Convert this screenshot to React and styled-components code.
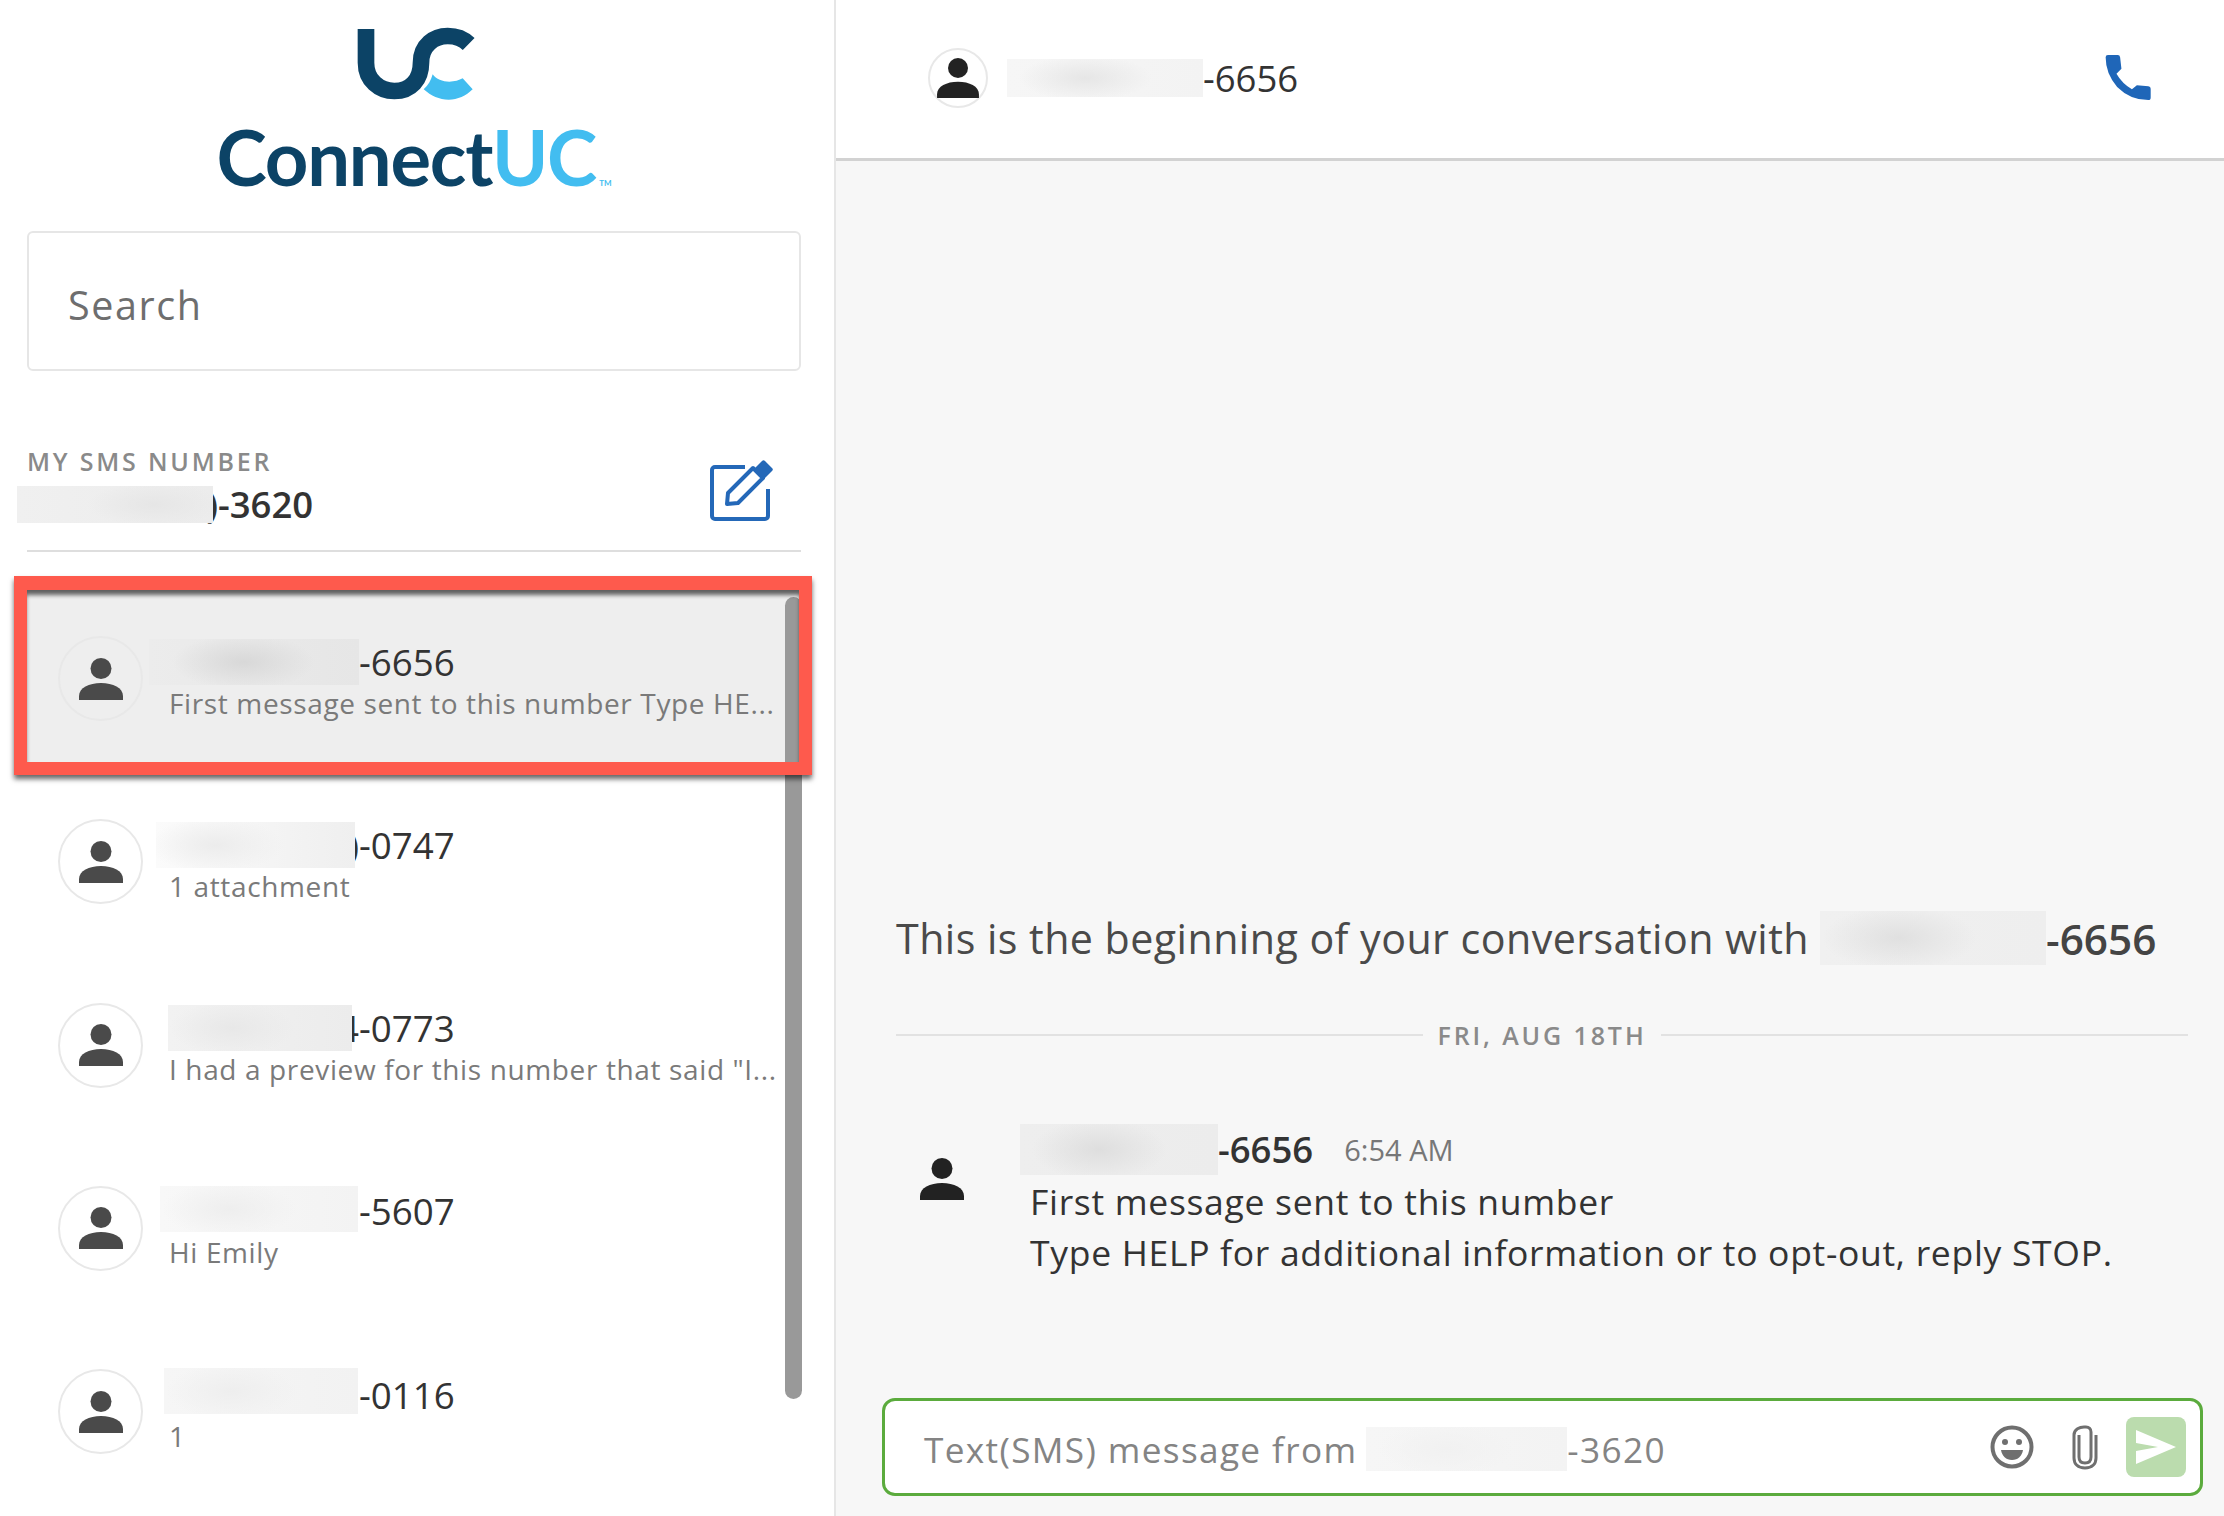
import React from "react";
import styled, { createGlobalStyle } from "styled-components";

const Global = createGlobalStyle`
  html, body { margin: 0; padding: 0; background: #fff; }
  body { font-family: "Open Sans", "Noto Sans", sans-serif; color: #333; }
  * { box-sizing: border-box; }
`;

const Page = styled.div`
  width: 2224px;
  height: 1516px;
  display: flex;
  overflow: hidden;
  background: #fff;
`;

const Sidebar = styled.aside`
  width: 836px;
  flex: none;
  height: 100%;
  border-right: 2px solid #e6e6e6;
  display: flex;
  flex-direction: column;
  overflow: hidden;
`;

const Brand = styled.div`
  height: 231px;
  padding-top: 26px;
  display: flex;
  flex-direction: column;
  align-items: center;
`;

const Mark = styled.svg`
  display: block;
  width: 120px;
  height: 75px;
  margin-left: -2px;
`;

const Wordmark = styled.div`
  margin-top: 17px;
  font-family: "Lato", sans-serif;
  font-weight: 700;
  font-size: 76px;
  line-height: 78px;
  letter-spacing: -1.2px;
  color: #0c4366;
  white-space: nowrap;
  margin-left: -6px;
`;

const WordAccent = styled.span`
  color: #42bdf0;
`;

const Tm = styled.sup`
  font-size: 8px;
  letter-spacing: 0;
  color: #42bdf0;
  vertical-align: baseline;
  margin-left: 3px;
`;

const Search = styled.div`
  margin: 0 33px 0 27px;
  height: 140px;
  flex: none;
  border: 2px solid #e6e6e6;
  border-radius: 6px;
  padding: 8px 0 0 39px;
  display: flex;
  align-items: center;
  font-size: 39.5px;
  letter-spacing: 1.6px;
  color: #6e6e6e;
`;

const NumberBlock = styled.div`
  margin: 0 33px 0 27px;
  height: 181px;
  flex: none;
  border-bottom: 2px solid #dedede;
  display: flex;
  justify-content: space-between;
  padding-top: 77px;
`;

const NumberText = styled.div`
  display: flex;
  flex-direction: column;
`;

const Eyebrow = styled.div`
  font-size: 25px;
  font-weight: 600;
  line-height: 26px;
  letter-spacing: 2.8px;
  color: #8a8a8a;
`;

const MyNumber = styled.div`
  display: flex;
  align-items: center;
  height: 44px;
  margin-top: 8px;
  font-size: 36.5px;
  font-weight: 600;
  color: #333;
`;

const EditButton = styled.svg`
  width: 64px;
  height: 64px;
  margin: 9px 28px 0 0;
  color: #2468b8;
`;

const Redaction = styled.span`
  position: relative;
  z-index: 1;
  flex: none;
  display: block;
  width: ${(p) => p.$w}px;
  height: ${(p) => p.$h}px;
  margin-left: ${(p) => p.$left || 0}px;
  transform: translateY(${(p) => p.$dy || 0}px);
  background:
    radial-gradient(ellipse 34% 60% at ${(p) => p.$spot || 40}% 50%, ${(p) => p.$dark || "#e4e4e4"}, transparent),
    linear-gradient(90deg, ${(p) => p.$base || "#f6f6f6"}, ${(p) => p.$mid || "#f0f0f0"});
`;

const Peek = styled.span`
  flex: none;
  width: ${(p) => p.$w}px;
  display: flex;
  justify-content: flex-end;
`;

const List = styled.div`
  position: relative;
  margin-top: 35px;
  flex: 1;
  display: flex;
  flex-direction: column;
`;

const Row = styled.div`
  flex: none;
  height: 183.25px;
  margin: 0 33px 0 27px;
  padding-left: 31px;
  display: flex;
  align-items: center;
  gap: 26px;
  background: ${(p) => (p.$active ? "#eeeeee" : "transparent")};
`;

const Avatar = styled.div`
  flex: none;
  width: 85px;
  height: 85px;
  border-radius: 50%;
  border: 2px solid #e8e8e8;
  display: flex;
  align-items: center;
  justify-content: center;
  background: ${(p) => (p.$active ? "#eeeeee" : "#fff")};
`;

const PersonIcon = styled.svg`
  display: block;
  flex: none;
  width: ${(p) => p.$size || 44}px;
  height: ${(p) => Math.round((p.$size || 44) * 0.95)}px;
  color: ${(p) => p.$color || "#4a4a4a"};
`;

const RowText = styled.div`
  min-width: 0;
  width: 608px;
  margin-top: 6px;
`;

const RowName = styled.div`
  display: flex;
  align-items: center;
  height: 44px;
  font-size: 36.7px;
  color: #333;
`;

const Preview = styled.div`
  height: 40px;
  line-height: 39px;
  font-size: 28px;
  letter-spacing: 0.63px;
  color: #7a7a7a;
  white-space: nowrap;
`;

const Scrollbar = styled.div`
  position: absolute;
  top: 10px;
  left: 785px;
  width: 17px;
  height: 802px;
  border-radius: 9px;
  background: #999;
`;

const Highlight = styled.div`
  position: absolute;
  z-index: 2;
  top: -11px;
  left: 14px;
  width: 798px;
  height: 199px;
  border: 13px solid #fe5a4d;
  border-width: 14px 13px 13px 13px;
  box-shadow: 0 4px 5px rgba(0, 0, 0, 0.6), inset 0 6px 4px -1px rgba(0, 0, 0, 0.6);
`;

const Main = styled.main`
  flex: 1;
  min-width: 0;
  display: flex;
  flex-direction: column;
  background: #f7f7f7;
`;

const Header = styled.header`
  height: 161px;
  flex: none;
  background: #fff;
  border-bottom: 3px solid #d2d2d2;
  display: flex;
  align-items: center;
  justify-content: space-between;
  padding: 0 72px 3px 92px;
`;

const HeaderPerson = styled.div`
  display: flex;
  align-items: center;
  gap: 19px;
`;

const HeaderAvatar = styled(Avatar)`
  width: 60px;
  height: 60px;
`;

const HeaderName = styled.div`
  display: flex;
  align-items: center;
  font-size: 36.5px;
  color: #333;
`;

const PhoneIcon = styled.svg`
  display: block;
  width: 48px;
  height: 48px;
  color: #1f66b8;
`;

const Conversation = styled.section`
  flex: 1;
  display: flex;
  flex-direction: column;
  justify-content: flex-end;
  padding: 0 36px 20px 60px;
`;

const Intro = styled.div`
  display: flex;
  align-items: center;
  height: 56px;
  font-size: 41.2px;
  letter-spacing: 0.45px;
  color: #4a4a4a;
  white-space: nowrap;
`;

const IntroBold = styled.b`
  font-weight: 600;
  font-size: 42.3px;
  letter-spacing: 0;
  color: #444;
`;

const DateDivider = styled.div`
  display: flex;
  align-items: center;
  gap: 14px;
  margin-top: 52px;
  height: 34px;
  font-size: 25px;
  font-weight: 600;
  letter-spacing: 2.9px;
  color: #8a8a8a;
  white-space: nowrap;
  &::before, &::after {
    content: "";
    flex: 1;
    height: 2px;
    background: #e2e2e2;
  }
`;

const Message = styled.div`
  display: flex;
  margin-top: 106px;
  padding-left: 24px;
`;

const MessageBody = styled.div`
  margin-left: 66px;
`;

const MessageHead = styled.div`
  display: flex;
  align-items: center;
  height: 44px;
  margin-top: -31px;
`;

const SenderNumber = styled.span`
  font-size: 36.5px;
  font-weight: 600;
  color: #333;
`;

const Time = styled.span`
  margin-left: 31px;
  font-size: 29px;
  color: #777;
`;

const MessageLine = styled.div`
  height: 51px;
  line-height: 51px;
  font-size: 35.5px;
  letter-spacing: 0.69px;
  color: #333;
  white-space: nowrap;
`;

const Lines = styled.div`
  margin-top: 5px;
`;

const Composer = styled.div`
  margin: 120px -15px 0 -14px;
  height: 98px;
  flex: none;
  display: flex;
  align-items: center;
  background: #fff;
  border: 3px solid #5bab3d;
  border-radius: 13px;
  padding: 0 14px 0 39px;
`;

const Placeholder = styled.div`
  flex: 1;
  display: flex;
  align-items: center;
  font-size: 35.2px;
  letter-spacing: 1.35px;
  color: #848484;
  white-space: nowrap;
  padding-top: 4px;
`;

const ToolIcon = styled.svg`
  display: block;
  flex: none;
  color: #6f6f6f;
  margin-left: ${(p) => p.$gap || 0}px;
`;

const Send = styled.div`
  flex: none;
  width: 60px;
  height: 60px;
  margin-left: 28px;
  border-radius: 8px;
  background: #bbdcae;
  display: flex;
  align-items: center;
  justify-content: center;
`;

const Person = ({ size, color }) => (
  <PersonIcon $size={size} $color={color} viewBox="0 0 44 42" aria-hidden="true">
    <circle cx="22" cy="10.5" r="10.5" fill="currentColor" />
    <path d="M0 42v-4C0 30 10 25 22 25s22 5 22 13v4z" fill="currentColor" />
  </PersonIcon>
);

const rows = [
  { num: "-6656", text: "First message sent to this number Type HE...", w: 210, left: -20, dy: 0, spot: 45, dark: "#d8d8d8", base: "#ececec", mid: "#e6e6e6" },
  { num: "-0747", text: "1 attachment", w: 199, left: -13, gap: 4, peek: ")", dy: 0, spot: 30, dark: "#ececec", base: "#fbfbfb", mid: "#efefef" },
  { num: "-0773", text: 'I had a preview for this number that said "I...', w: 184, left: -1, gap: 7, peek: "4", dy: 0, spot: 35, dark: "#e8e8e8", base: "#f2f2f2", mid: "#ececec" },
  { num: "-5607", text: "Hi Emily", w: 198, left: -9, gap: 1, dy: -2, spot: 35, dark: "#eeeeee", base: "#f8f8f8", mid: "#f3f3f3" },
  { num: "-0116", text: "1", w: 194, left: -5, gap: 1, dy: -4, spot: 35, dark: "#eeeeee", base: "#f6f6f6", mid: "#f2f2f2" },
];

export default function App() {
  return (
    <Page>
      <Global />
      <Sidebar>
        <Brand>
          <Mark viewBox="530 75 360 225" aria-label="UC logo">
            <path
              d="M560 84V185C560 238 600 270 645 270C695 270 725 235 725 185C725 132 765 105 805 105C830 105 852 113 868 129"
              fill="none"
              stroke="#0c4366"
              strokeWidth="50"
            />
            <path
              d="M760 220C770 235 790 242 810 242C825 242 840 238 850 232L880 265C860 285 835 296 808 296C780 296 755 285 733 265C747 252 755 238 760 220Z"
              fill="#42bdf0"
            />
          </Mark>
          <Wordmark>
            Connect<WordAccent>UC</WordAccent>
            <Tm>TM</Tm>
          </Wordmark>
        </Brand>
        <Search>Search</Search>
        <NumberBlock>
          <NumberText>
            <Eyebrow>MY SMS NUMBER</Eyebrow>
            <MyNumber>
              <Redaction $w={196} $h={37} $left={-10} $spot={70} $dark="#e6e6e6" $base="#f0f0f0" $mid="#ececec" />
              <Peek $w={5}>)</Peek>
              <span>-3620</span>
            </MyNumber>
          </NumberText>
          <EditButton viewBox="0 0 64 64" fill="none" aria-hidden="true">
            <path d="M36 10H6a3 3 0 0 0-3 3v46a3 3 0 0 0 3 3h50a3 3 0 0 0 3-3V32" stroke="currentColor" strokeWidth="4" />
            <path d="M18 47l1-11 25-25 10 10-25 25z" stroke="currentColor" strokeWidth="4" strokeLinejoin="round" />
            <path d="M45 12l8-8a2 2 0 0 1 3 0l7 7a2 2 0 0 1 0 3l-8 8z" fill="currentColor" />
          </EditButton>
        </NumberBlock>
        <List>
          {rows.map((r, i) => (
            <Row key={r.num} $active={i === 0}>
              <Avatar $active={i === 0}>
                <Person />
              </Avatar>
              <RowText>
                <RowName>
                  <Redaction $w={r.w} $h={46} $left={r.left} $dy={r.dy} $spot={r.spot} $dark={r.dark} $base={r.base} $mid={r.mid} />
                  {r.gap ? <Peek $w={r.gap}>{r.peek}</Peek> : null}
                  <span>{r.num}</span>
                </RowName>
                <Preview>{r.text}</Preview>
              </RowText>
            </Row>
          ))}
          <Scrollbar />
          <Highlight />
        </List>
      </Sidebar>
      <Main>
        <Header>
          <HeaderPerson>
            <HeaderAvatar>
              <Person size={42} color="#222" />
            </HeaderAvatar>
            <HeaderName>
              <Redaction $w={196} $h={38} $spot={40} $dark="#e6e6e6" $base="#f6f6f6" $mid="#f3f3f3" />
              <span>-6656</span>
            </HeaderName>
          </HeaderPerson>
          <PhoneIcon viewBox="40 40 146 146" aria-hidden="true">
            <path
              d="M45 50Q45 43 52 43H82Q88 43 89 50L93 85L78 100Q95 130 125 147L140 135L175 138Q182 139 182 146V172Q182 180 175 180Q120 180 80 140Q45 100 45 50Z"
              fill="currentColor"
            />
          </PhoneIcon>
        </Header>
        <Conversation>
          <Intro>
            <span>This is the beginning of your conversation with</span>
            <Redaction $w={226} $h={54} $left={11} $spot={35} $dark="#e0e0e0" $base="#f0f0f0" $mid="#eeeeee" />
            <IntroBold>-6656</IntroBold>
          </Intro>
          <DateDivider>FRI, AUG 18TH</DateDivider>
          <Message>
            <Person size={44} color="#222" />
            <MessageBody>
              <MessageHead>
                <Redaction $w={198} $h={51} $left={-10} $spot={40} $dark="#dedede" $base="#eeeeee" $mid="#ececec" />
                <SenderNumber>-6656</SenderNumber>
                <Time>6:54 AM</Time>
              </MessageHead>
              <Lines>
                <MessageLine>First message sent to this number</MessageLine>
                <MessageLine>Type HELP for additional information or to opt-out, reply STOP.</MessageLine>
              </Lines>
            </MessageBody>
          </Message>
          <Composer>
            <Placeholder>
              <span>Text(SMS) message from</span>
              <Redaction $w={201} $h={44} $left={9} $spot={40} $dark="#f1f1f1" $base="#f6f6f6" $mid="#f3f3f3" />
              <span>-3620</span>
            </Placeholder>
            <ToolIcon width="44" height="44" viewBox="0 0 44 44" fill="none" aria-hidden="true">
              <circle cx="22" cy="22" r="19.5" stroke="currentColor" strokeWidth="4" />
              <circle cx="15" cy="17" r="3" fill="currentColor" />
              <circle cx="29" cy="17" r="3" fill="currentColor" />
              <path d="M11 25h22c-1 6-5 10-11 10s-10-4-11-10z" fill="currentColor" />
            </ToolIcon>
            <ToolIcon $gap={38} width="26" height="46" viewBox="0 0 26 46" fill="none" aria-hidden="true">
              <path
                d="M7 11v22c0 4 2.500 6 6 6s6-2 6-6V8c0-3-2-5-5-5H12C8 3 2 5 2 11v23c0 6 4 10 11 10s11-4 11-10V11"
                stroke="currentColor"
                strokeWidth="3"
              />
            </ToolIcon>
            <Send>
              <svg width="40" height="34" viewBox="0 0 40 34" aria-hidden="true">
                <path d="M0 0L40 17L0 34V21L22 17L0 13z" fill="#fff" />
              </svg>
            </Send>
          </Composer>
        </Conversation>
      </Main>
    </Page>
  );
}
